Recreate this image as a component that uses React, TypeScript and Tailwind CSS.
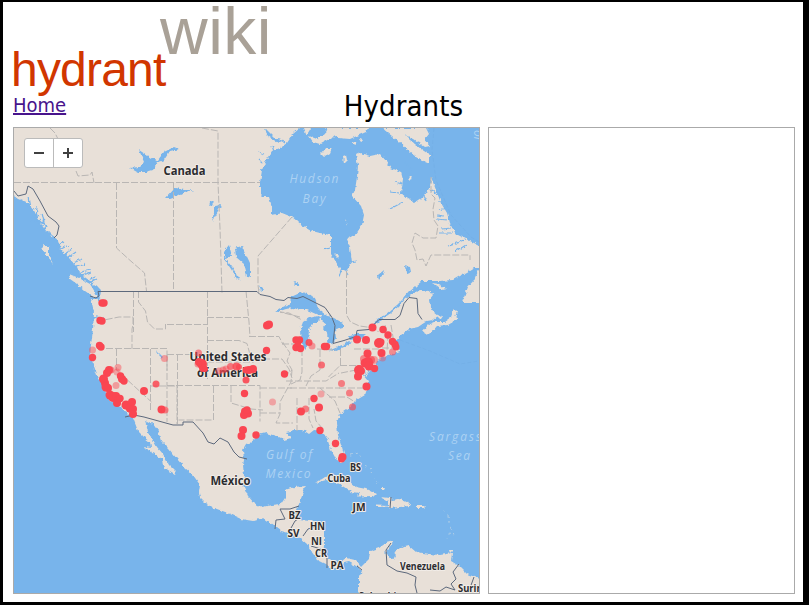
import React from 'react';

const WATER = '#78b4eb';
const LAND = '#e8e0d8';

// Continental outline in map canvas units
const mainland =
  'M10 120 L300 120 L300 128 L293 134 L287 143 L280 148 L272 151 L266 160 L262 170 L260 183 L260 194 L263 197 L269 197 L272 207 L272 215 L282 213 L292 217 L302 225 L312 231 L320 233 L331 235 L331 254 L336 262 L341 270 L347 270 L352 262 L350 247 L347 239 L356 234 L362 225 L364 215 L361 206 L352 196 L355 190 L357 177 L358 165 L356 155 L360 153 L370 156 L380 154 L386 161 L391 168 L401 172 L403 180 L401 193 L407 198 L415 202 L424 196 L430 187 L431 177 L436 190 L441 203 L447 213 L450 224 L456 234 L464 238 L472 242 L480 246 L480 268 L474 268 L466 273 L460 276 L453 280 L440 281 L422 281 L416 286 L409 292 L403 299 L397 305 L386 314 L373 323 L374 324.5 L388 315 L399 307 L405 299 L411 294 L420 290 L430 291 L433 295 L429 300 L430 306 L433 312 L438 316 L433 320 L427 321 L418 327 L409 329 L401 335 L396 341 L395 347 L400 351 L394 353 L385 356 L377 361 L374 370 L367 375 L364 367 L368 382 L367 389 L365 395 L355 401 L349 408 L340 414 L337 422 L338 435 L342 447 L345 458 L341 463 L336 459 L331 450 L328 440 L322 431 L314 430 L309 434 L303 430 L295 430 L286 432 L291 438 L284 440 L276 436 L266 433 L258 435 L254 440 L246 445 L243 450 L244 460 L243 465 L244 476 L243 485 L248 496 L254 503 L262 507 L272 505 L281 504 L285 498 L285 490 L294 487 L305 486 L302 496 L299 504 L296 511 L299 520 L311 521 L324 525 L324 546 L323 553 L331 561 L339 563 L346 558 L355 560 L361 567 L369 559 L370 551 L379 548 L386 543 L394 541 L389 548 L385 552 L391 558 L397 549 L409 546 L416 552 L430 554 L440 555 L452 553 L451 561 L459 566 L467 574 L480 579 L480 600 L359 600 L359 576 L362 571 L356 566 L349 562 L344 563 L341 567 L332 569 L326 564 L318 560 L312 552 L307 544 L300 538 L289 533 L281 531 L273 525 L263 518 L253 521 L241 519 L228 513 L214 508 L206 503 L200 497 L199 492 L200 485 L193 475 L184 467 L177 459 L169 449 L161 441 L158 431 L153 424 L145 420 L148 432 L152 438 L157 447 L163 454 L169 465 L176 472 L175 474 L168 470 L163 466 L162 459 L154 453 L146 449 L145 447 L151 448 L150 442 L145 438 L138 431 L133 418 L127 412 L117 405 L108 399 L104 387 L97 375 L94 366 L90 355 L91 345 L93 330 L94 312 L91 299 L96 299 L101 298 L98 287 L90 281 L82 275 L76 266 L69 258 L61 249 L58 240 L51 235 L43 227 L36 214 L28 203 L18 199 L10 193Z';

const islands = [
  'M69 274L79 278L90 284L97 295L95 298L85 291L77 284L70 279Z',
  'M42 244L49 247L49 256L53 264L47 257L43 250Z',
  'M382 128L397 140L410 152L425 162L430 164L430 155L421 149L410 140L405 135L414 139L425 147L430 146L425 139L429 134L426 128Z',
  'M321 154L326 148L332 148L330 153L324 157Z', 'M343 156L346 155L347 160L344 163Z', 'M353 141L356 142L357 145L353 144Z',
  'M359 139L361 138L363 141L361 142Z', 'M303 128L311 128L306 136Z', 'M309 136L317 139L325 134L328 128L340 128L331 138L320 144L313 142Z',
  'M326 128L368 128L366 132L350 139L338 138L331 133Z', 'M409 178L412 176L411 180Z', 'M334 254L339 256L338 258Z',
  'M423 331L428 325L435 322L444 322L451 317L454 309L457 312L455 317L458 319L448 325L437 326L431 333L425 335Z',
  'M432 283L439 284L447 289L442 290Z', 'M436 315L443 317L441 320Z', 'M479 268L474 280L468 287L463 300L462 303L480 303V268Z',
  'M316 483L325 477L333 476L342 478L350 482L356 487L366 489L376 494L374 496L358 496.5L360 493L351 492L344 487L336 482L326 480Z',
  'M381 497L390 498L392 500L399 499L410 504L409 506L400 507L391 508L388 506.500L376 507L376 504.500L388 505L388 501Z',
  'M417 505L424.500 505L424.500 508L417 508Z', 'M449 550L453 550L450 553Z', 'M355 506L364 507L358 509Z', 'M381 488L385 488L384 490L381 490Z',
];

const lakes = [
  'M130 168L139 167L144 162L139 150L151 158L158 160L164 152L174 147L179 149L170 151L164 160L158 162L153 170L146 172L137 172Z',
  'M166 198L175 188L184 190L195 190L184 192L176 196L170 198Z', 'M210 202L214 200L212 205L209 206Z', 'M214 206L221 205L218 212L212 222L214 213Z',
  'M235 248L242 246L250 263L250 277L247 276L244 264L236 257Z', 'M224 251L229 245L232 256L225 258L232 267L240 279L237 280L231 269L224 259Z',
  'M275 311L282 307L290 303L291 297L302 292L315 297L318 309L326 315L318 315L307 310L299 310L294 308L286 309L277 312Z',
  'M305 349L301 343L300 330L303 322L309 318L318 316L324 318L318 320L309 329L308 343L306 350Z',
  'M323 315L332 317L343 323L343 328L335 330L336 338L333 343L329 345L327 334L323 328L326 324L322 321Z',
  'M328 350L333 349L343 345L350 341L351 343L344 347L335 351Z',
  'M348 337L355 334L366 334L361 338L350 340Z', 'M378 275L384 270L383 274L379 280Z', 'M405 266L410 267L411 272L406 273Z', 'M295 281L299 284L297 287L294 284Z',
  'M156 350L163 357L161 358Z', 'M392 551L396 556L394 560L389 556Z', 'M259 284L263 290L261 292Z', 'M300 512L304 514L302 516Z',
  'M96 285L101 290L99 302L96 295L92 288Z', 'M265 128L276 139L284 140L278 143L267 135Z',
];

const fjords = [
  'M22 203l7 2l5 11M28 197l2 11l9 9M34 207l-2 15M37 207l-1 11l10 8l-4 8M42 213l4 18l5 2M45 219l-9 9M32 216l12 17',
  'M58 246l6-4M59 250l10-5M62 256l10-7M66 259l10-7M69 265l13-6M73 268l13-4M77 273l13-3M81 276l10-4M86 281l9-4M90 282l6-3',
  'M91 316l12 2M400 193l-11-1M402 184l-7-2M403 202l-13 7M412 171l-7-9M424 196l2 6M430 190l11 6M438 202l8-1M440 210l9-3M444 216l-7-1M447 220l-10-1M451 228l-9 1M452 233l-12 0M465 240l-17 6M466 245l-11 7',
  'M280 139l5 4M290 138l6-3M264 154l-6-2M263 163l-4-4M272 146l3 8M330 248l-6 2M341 270l-2 7M345 270l3 5M350 262l6-1',
  'M380 320l-3 3M377 365l-6 7M369 374v11M368 380l-5-6M366 366l4 8',
];

const dashed = [
  'M14 182.5H260', 'M50 128l5 5l4 8M76 171l2 5l12-1l2-3l2 11', 'M116.5 183v65l12 11l16 14l2 18', 'M173.500 183v108M202 128l16 3v52l2 45l2 65',
  'M292 217l-34 39v29l1 8', 'M346.500 271v44l4 7l9 4l15 2l4 4', 'M431 177v17l4 4l-2 11l1 11l4 6l-2 12h-13l-8-5l-3 10l3 7l2 10l6-1l3 7l5-11h39v5',
  'M133.500 291v41M97 318l7 2l15-3h14', 'M138.500 291v11l7 9l2 11l7 7h11V324M133 317v8l-1 4v20', 'M97 348.500h70v22M116.500 349v21l35 32', 'M150.500 349v63M150 386h27v38M167 324.500h40',
  'M207.500 291v88M207 317.500h41M246 291l3 31l1 15M207 340.500h32l8 3l3 11l4 11', 'M249 336.500h30l4 8M167 354.500h40M167 355v67M177.500 354v70M207 362h45',
  'M167 385.500h93v36M213.500 386v34h-35M231 386v17l20 6l12 1', 'M254 359h28l7 10l3 9M260 388h32M260 413h20M284 343h-1l7 10l-3 8l5 9l-6 5M292 370l-1 12l-5 9l-6 11v12l-4 9h17',
  'M302 349v23l-2 8l-9 4M290 388h50M297 398v33M309 398v21l4 9M282 344h16M300 317l-20-5l9 1l13 7M317 349l19 1M320 350v20l-9 6l-5 10',
  'M286 381l40 0l13-8M340 365.500h38M340.500 349v16l-12 12M339 388h30M320 388l15 13l5 12M329 397l18 0l8 5M323 429l-7-8l-2-12M341 373l15-3l7 1',
  'M354 349h25l6 5M385 325l3 11l-1 15M391 325l3 18M382 348h14',
];

const borders = [
  'M14 191l4 5l8-2l2-8l5 3l7 12l8 15l8 6l3 4l-2 9l-3 3', 'M90 296l6 2l3-2l-1-4.500H257l3 3l10 2l6 3l8 1l4-3l9 1l6-2l12 6l10 5l7 10l3 8l-2 18l11-3l12-4l1-6l12-1l10-10h16l5-4l4-12l5-6l8 1l1 15l4 6',
  'M125 417l9-2l10 2l29 8h10v-3h10l10 11l5 9l6 2l6-6l8 4l6 10l5 5l8 2', 'M275 529l1-9l9-1l-5-10h10l9-3M291 528l4-7l6-4M303 536l5-7l9-3M311 546l13 4M327 558v10M357 566l5 4',
  'M391 543l-5 7l1 15l10 6l10 2l9 4l-1 8l2 8', 'M459 564l-6 8l3 7l-5 5l4 6l-9-3l-6 4l-10-1M474 577l-4 11l2 8', 'M391 497l-1 11',
];

const dots: [number, number, number?, number?][] = [
  [102,303],[104,303],[100,320.500],[102,321],[99.500,345.500],[101,347],[92.500,350,3.500,.45],[92.500,357.500],
  [109,370,4],[107,373,4],[111,370,3.500,.6],[103.500,379,4.500],[105,383,4],[106,387,4.500],[108,388,4],[118,367.500,3.500,.45],[117,372,3.500,.4],[120.500,376],[122,379,4],[124,381],[116,385.500,3.500,.45],
  [110,395,4.500],[113,397,5],[116,396,4],[118,400],[120,398.500],[117,403,4],[126,405,4.500],[130,408,4.500],[132,402,4],[133,409,4],[133,414,4],[144,391,4],[156,384,3.500,.85],[164.500,358.500,3.500,.45],[161.500,409.500,4],[165,410,3.500,.65],
  [198.500,353,3.500,.6],[199,362,4],[202,364,5],[203,368,4],[198,364,3.500,.5],[205,369,3],[219,371,3.500,.5],[223,370,3.500,.5],[226,369,3.500,.5],[230.500,366.500,3.500,.7],[236.500,366.500,4,.85],[239,367,3,.8],
  [249,370,4],[253,369,4],[246,370,3.500],[246,380,3.500,.9],[244.500,393.500],[245,411.500,4],[248,413.500,4],[244,415,4],[247,410],[243,430,4],[241.500,436,4],[256,435],
  [267,325.500,4],[269,324.500,4],[266.500,350.500],[284.500,374],[272.500,402,3.500,.4],[296,340],[299.500,340],[296,347.500],[300.500,348.500],[298,344,3],[309,342.500,3.500,.9],[312,346,3.500,.5],[324.500,346.500],[326.500,346.500],[321.500,365,3.500,.75],[321,394,3.500,.4],
  [314,398.500],[319,407.500,4],[301,411.500,4],[305.500,409,3.500,.65],[320,430.500],[335.500,443.500],[342.500,457,4],[341.500,459,3.500],
  [372.500,327.500,4],[383,329.500],[388,335],[392.500,341.500],[395,344.500],[396,347,3.500],[357,339.500,4],[366,340,4],[379,343,5],[381,342,3.500],[381.500,353,4],[392.500,352,3.500,.55],[382.500,358,3.500,.4],[374,360,4,.45],
  [367.500,353.500,4],[364,359,4,.6],[371,360,4,.7],[365,363,4.500],[368,362,5],[369,366,4.500],[374.500,368.500],[359,370,5],[361,371,4],[358,376.500,4],[366.500,386.500,4],[341.500,383.500,3.500,.65],[349.500,393,3.500,.65],[352.500,407,3.500,.65],
];

type LabelProps = { x: number; y: number; w: number; size?: number; children: string };

function Place({ x, y, w, size = 11, children }: LabelProps) {
  return (
    <text x={x} y={y} fontSize={size} textLength={w} lengthAdjust="spacingAndGlyphs" textAnchor="middle" fontWeight={700} fill="#2c2c30" stroke="#f1ece7" strokeWidth={2} strokeLinejoin="round" paintOrder="stroke">
      {children}
    </text>
  );
}

function Sea({ x, y, w, children }: LabelProps) {
  return (
    <text x={x} y={y} fontSize={12} textLength={w} textAnchor="middle" fontStyle="italic" fill="#acd2f3">
      {children}
    </text>
  );
}

function HydrantMap() {
  return (
    <svg viewBox="14 128 465 465" className="block h-full w-full font-['Open_Sans','Noto_Sans',sans-serif] [font-stretch:normal]">
      <defs>
        <filter id="coast" x="0" y="0" width="100%" height="100%" colorInterpolationFilters="sRGB">
          <feTurbulence type="fractalNoise" baseFrequency="0.25" numOctaves="2" seed="4" result="noise" />
          <feDisplacementMap in="SourceGraphic" in2="noise" scale="4" xChannelSelector="R" yChannelSelector="G" />
        </filter>
      </defs>
      <rect x="14" y="128" width="465" height="465" fill={WATER} />
      <g filter="url(#coast)">
        <rect x="0" y="110" width="500" height="500" fill={WATER} />
        <path d={mainland} fill={LAND} />
        {islands.map((d) => <path key={d} d={d} fill={LAND} />)}
        {lakes.map((d) => <path key={d} d={d} fill={WATER} />)}
        {fjords.map((d) => <path key={d} d={d} fill="none" stroke={WATER} strokeWidth={1.2} />)}
        <path d="M345 222l4-3M346 225l3-2M350 455l9-2l2 6M365 465l6 4M370 472l8 12M440 506l8 9l2 15l-2 9M451 528l3 8" fill="none" stroke="#b5cfe4" strokeWidth={0.9} strokeDasharray="2 4" />
      </g>
      <path d="M434 128l-2 22l4 30l15 35l20 22l8 5M400 340l30 11l30 13l19-3" fill="none" stroke="#6da9e0" strokeWidth={0.6} strokeDasharray="4 2" opacity={0.6} />
      <g fill="none" stroke="#b9b6b4" strokeWidth={1} strokeDasharray="7 2">
        {dashed.map((d) => <path key={d} d={d} />)}
      </g>
      <g fill="none" stroke="#5d697c" strokeWidth={1} strokeLinejoin="round">
        {borders.map((d) => <path key={d} d={d} />)}
      </g>
      <Sea x={314} y={183} w={49}>Hudson</Sea>
      <Sea x={314} y={202.500} w={23}>Bay</Sea>
      <Sea x={289} y={459} w={46}>Gulf of</Sea>
      <Sea x={288} y={478} w={45}>Mexico</Sea>
      <Sea x={455} y={441} w={52}>Sargass</Sea>
      <Sea x={459} y={460} w={22}>Sea</Sea>
      <text transform="translate(474 130) rotate(90)" fontSize={12} fontStyle="italic" fill="#acd2f3">or</text>
      <Place x={184.500} y={175} w={42} size={11.500}>Canada</Place>
      <Place x={228} y={361} w={77} size={11.500}>United States</Place>
      <Place x={227.500} y={377} w={61} size={11.500}>of America</Place>
      <Place x={230.500} y={485} w={40} size={12}>México</Place>
      <Place x={294.500} y={519} w={12} size={10}>BZ</Place>
      <Place x={293.500} y={537} w={12} size={10}>SV</Place>
      <Place x={317.500} y={529.500} w={15} size={10}>HN</Place>
      <Place x={316.500} y={545} w={11} size={10}>NI</Place>
      <Place x={321} y={557} w={12} size={10}>CR</Place>
      <Place x={337} y={569} w={13} size={10}>PA</Place>
      <Place x={355.500} y={471} w={11} size={10}>BS</Place>
      <Place x={339} y={481.500} w={23} size={10}>Cuba</Place>
      <Place x={359} y={511} w={13} size={10}>JM</Place>
      <Place x={422.500} y={570} w={45} size={10}>Venezuela</Place>
      <Place x={480.500} y={592} w={45} size={10}>Suriname</Place>
      <Place x={380} y={600} w={44} size={10}>Colombia</Place>
      <g fill="#fa4652">
        {dots.map(([x, y, r = 3.7, o = 1], i) => <circle key={i} cx={x} cy={y} r={r} opacity={o} />)}
      </g>
    </svg>
  );
}

function ZoomControl() {
  return (
    <div className="absolute left-[10px] top-[10px] flex h-[30px] w-[59px] divide-x divide-[#bbb] rounded-[3px] border border-[#bbb] bg-white">
      <button aria-label="Zoom out" className="flex flex-1 items-center justify-center">
        <svg width="10" height="10" viewBox="0 0 10 10"><path d="M0 5h10" stroke="#404040" strokeWidth="2" /></svg>
      </button>
      <button aria-label="Zoom in" className="flex flex-1 items-center justify-center">
        <svg width="10" height="10" viewBox="0 0 10 10"><path d="M0 5h10M5 0v10" stroke="#404040" strokeWidth="2" /></svg>
      </button>
    </div>
  );
}

export default function App() {
  return (
    <div className="h-[605px] w-[809px] overflow-hidden border-t-2 border-r-[6px] border-b-[3px] border-l-[3px] border-black bg-white pl-[10px] font-['DejaVu_Sans_Condensed','DejaVu_Sans',sans-serif] [font-stretch:condensed]">
      <header className="flex h-[89px] items-start whitespace-nowrap font-['Liberation_Sans',sans-serif]">
        <span className="-ml-[2px] mt-[41px] w-[149px] text-[48px] leading-[54px] tracking-[-0.8px] text-[#d13600]">hydrant</span>
        <span className="-mt-[8px] text-[66px] leading-[74px] tracking-[0.5px] text-[#a9a197]">wiki</span>
      </header>
      <div className="grid h-[36px] w-[781px] grid-cols-[1fr_auto_1fr] whitespace-nowrap">
        <a href="#" className="mt-[3px] justify-self-start text-[20px] leading-[22px] text-[#48148c] underline">Home</a>
        <h1 className="-mt-[3px] text-[29px] leading-[36px] tracking-[0.1px] text-black">Hydrants</h1>
      </div>
      <main className="flex gap-2">
        <section className="relative h-[467px] w-[467px] overflow-hidden border border-[#aaa]">
          <HydrantMap />
          <ZoomControl />
        </section>
        <aside className="h-[467px] w-[307px] border border-[#aaa]" />
      </main>
    </div>
  );
}
